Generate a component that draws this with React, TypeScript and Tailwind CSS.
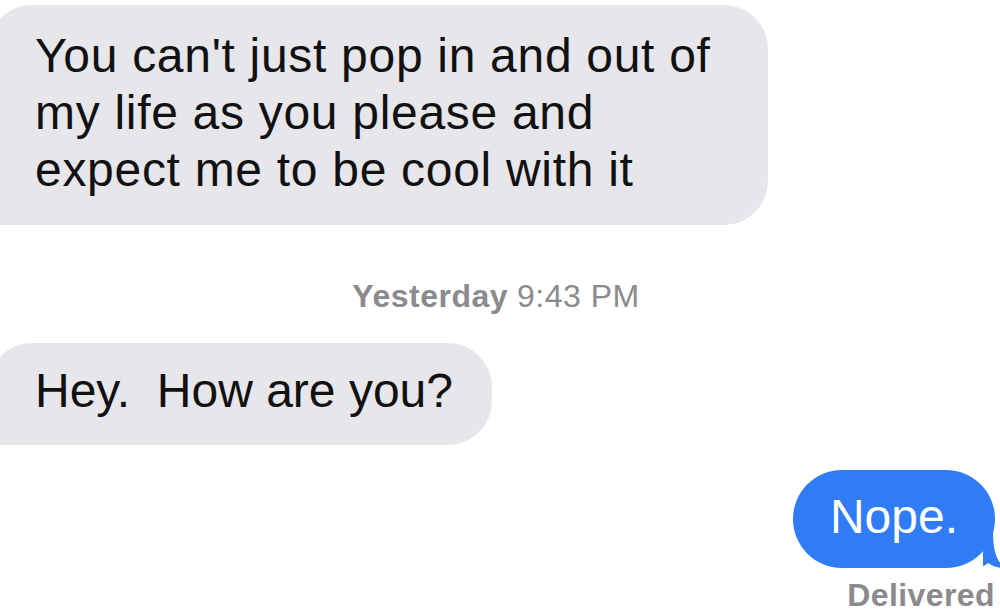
const font = { fontFamily: '"Liberation Sans", Arial, sans-serif' };

function GrayBubble({ children, width, className }: { children: React.ReactNode; width: string; className: string }) {
  return (
    <div className={`relative -ml-[12px] ${width} rounded-[44px] rounded-bl-[6px] bg-[#e6e6eb] pl-[47px] ${className}`}>
      <p className="text-[48px] leading-[57px] text-[#111111] whitespace-pre-line">{children}</p>
    </div>
  );
}

export default function App() {
  return (
    <div className="h-[610px] w-[1000px] overflow-hidden bg-white pt-[5px]" style={font}>
      <GrayBubble width="w-[780px]" className="pt-[22px] pb-[27px] tracking-[0.7px]">
        {"You can't just pop in and out of\nmy life as you please and\nexpect me to be cool with it"}
      </GrayBubble>

      <div className="mt-[53px] flex justify-center pr-[8px] text-[32px] leading-[36px] tracking-[0.5px] text-[#8a8a8f]">
        <span className="font-bold">Yesterday</span>
        <span className="ml-[9px]">9:43 PM</span>
      </div>

      <div className="mt-[29px]">
        <GrayBubble width="w-[504px]" className="pt-[19px] pb-[26px]">
          {"Hey.\u00a0 How are you?"}
        </GrayBubble>
      </div>

      <div className="mt-[25px] flex justify-end pr-[5px]">
        <div className="relative w-[202px] rounded-[49px] bg-[#2f7cf5] pt-[18px] pb-[23px] text-center">
          <p className="text-[48px] leading-[57px] text-white">Nope.</p>
          <svg className="absolute bottom-0 right-[-10px]" width="22" height="36" viewBox="0 0 22 36">
            <path d="M0 0 H10 C10 17 13 29 22 36 C15 36 9 34 5 31 C3 33 1 34 0 34 Z" fill="#2f7cf5" />
          </svg>
        </div>
      </div>

      <div className="mt-[13px] flex justify-end pr-[5px] text-[32px] font-bold leading-[28px] tracking-[0.4px] text-[#8a8a8f]">
        Delivered
      </div>
    </div>
  );
}
